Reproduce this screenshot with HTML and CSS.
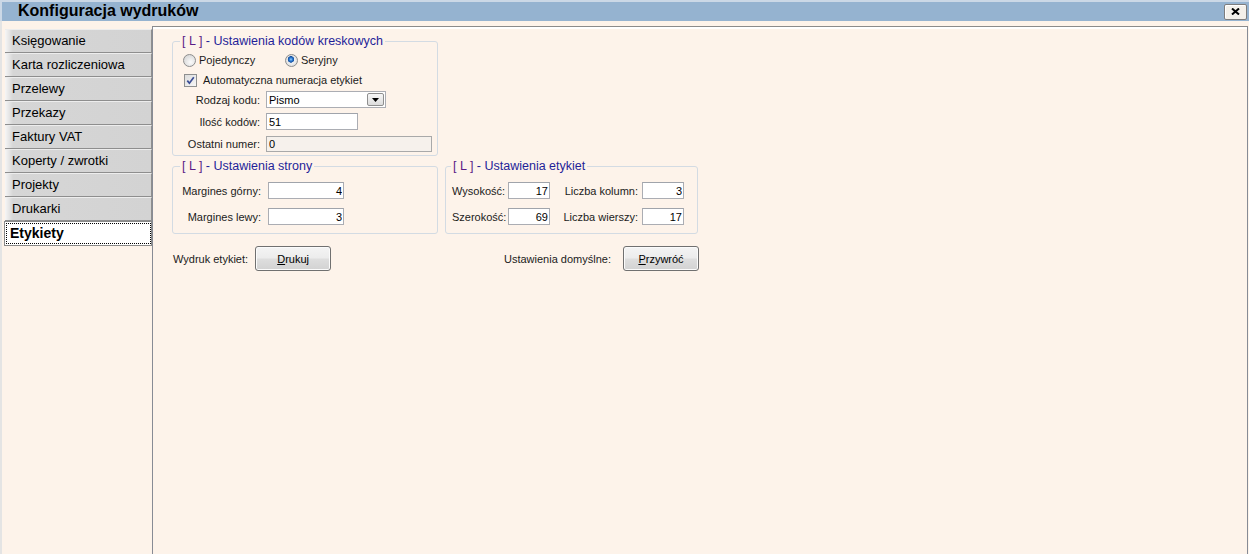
FILE: index.html
```html
<!doctype html>
<html lang="pl">
  <head>
    <meta charset="UTF-8" />
    <meta name="viewport" content="width=device-width, initial-scale=1.0" />
    <title>Konfiguracja wydruków</title>
    <link rel="stylesheet" href="styles.css">
  </head>
  <body>
    <div class="window">
      <!-- Pasek tytułu -->
      <header class="titlebar">
        <h1 class="title">Konfiguracja wydruków</h1>
        <button class="close-btn" type="button" aria-label="Zamknij">
          <svg width="9" height="7" viewBox="0 0 9 7">
            <path d="M1 0.5 L8 6.5 M8 0.5 L1 6.5" stroke="#000" stroke-width="2" fill="none"/>
          </svg>
        </button>
      </header>

      <div class="window-body">
        <!-- Zakładki -->
        <nav class="tabs">
          <div class="tab">Księgowanie</div>
          <div class="tab">Karta rozliczeniowa</div>
          <div class="tab">Przelewy</div>
          <div class="tab">Przekazy</div>
          <div class="tab">Faktury VAT</div>
          <div class="tab">Koperty / zwrotki</div>
          <div class="tab">Projekty</div>
          <div class="tab">Drukarki</div>
          <div class="tab tab-active"><span>Etykiety</span></div>
        </nav>

        <main class="panel">
          <div class="panel-content">
            <fieldset class="group group-codes">
              <legend><span class="br">[ L ]</span> - Ustawienia kodów kreskowych</legend>
              <div class="radio-row">
                <label class="radio radio-first"><span class="radio-box"></span>Pojedynczy</label>
                <label class="radio"><span class="radio-box checked"></span>Seryjny</label>
              </div>
              <label class="check-row">
                <span class="check-box">
                  <svg width="9" height="9" viewBox="0 0 9 9">
                    <path d="M1.3 4.6 L3.4 7.2 L7.8 1.2" fill="none" stroke="#3b4d94" stroke-width="1.7"/>
                  </svg>
                </span>
                Automatyczna numeracja etykiet
              </label>
              <div class="form-grid codes-grid">
                <span class="lbl">Rodzaj kodu:</span>
                <div class="select">
                  <span>Pismo</span>
                  <span class="select-btn">
                    <svg width="7" height="4" viewBox="0 0 7 4"><path d="M0 0 H7 L3.5 4 Z" fill="#000"/></svg>
                  </span>
                </div>
                <span class="lbl">Ilość kodów:</span>
                <input class="field field-count" type="text" value="51">
                <span class="lbl">Ostatni numer:</span>
                <input class="field field-last" type="text" value="0" readonly>
              </div>
            </fieldset>

            <div class="group-row">
              <fieldset class="group group-page">
                <legend><span class="br">[ L ]</span> - Ustawienia strony</legend>
                <div class="form-grid page-grid">
                  <span class="lbl">Margines górny:</span>
                  <input class="field num" type="text" value="4">
                  <span class="lbl">Margines lewy:</span>
                  <input class="field num" type="text" value="3">
                </div>
              </fieldset>

              <fieldset class="group group-labels">
                <legend><span class="br">[ L ]</span> - Ustawienia etykiet</legend>
                <div class="form-grid labels-grid">
                  <span class="lbl lbl-left">Wysokość:</span>
                  <input class="field num" type="text" value="17">
                  <span class="lbl">Liczba kolumn:</span>
                  <input class="field num" type="text" value="3">
                  <span class="lbl lbl-left">Szerokość:</span>
                  <input class="field num" type="text" value="69">
                  <span class="lbl">Liczba wierszy:</span>
                  <input class="field num" type="text" value="17">
                </div>
              </fieldset>
            </div>

            <div class="actions">
              <div class="action action-print">
                <span>Wydruk etykiet:</span>
                <button class="btn" type="button"><u>D</u>rukuj</button>
              </div>
              <div class="action action-reset">
                <span>Ustawienia domyślne:</span>
                <button class="btn" type="button"><u>P</u>rzywróć</button>
              </div>
            </div>
          </div>
        </main>
      </div>
    </div>
  </body>
</html>
```

FILE: styles.css
```css
/* Reset */
* {
  margin: 0;
  padding: 0;
  box-sizing: border-box;
}

html, body {
  height: 100%;
}

body {
  font-family: "Liberation Sans", Arial, sans-serif;
  font-size: 11px;
  color: #1b1b1b;
  background: #fdf3ea;
  overflow: hidden;
}

.window {
  display: flex;
  flex-direction: column;
  height: 100vh;
}

/* Pasek tytułu */
.titlebar {
  flex: none;
  height: 21px;
  display: flex;
  align-items: center;
  justify-content: space-between;
  padding: 0 2px 0 18px;
  background: #95b3d0;
  box-shadow: inset 2px 2px 0 #cbd8e6;
}

.title {
  font-size: 16px;
  font-weight: bold;
  line-height: 21px;
  color: #000;
}

.close-btn {
  width: 23px;
  height: 16px;
  margin-top: 2px;
  display: flex;
  align-items: center;
  justify-content: center;
  background: #f3f0ea;
  border: 1px solid #7d7d7d;
  border-radius: 2px;
  box-shadow: inset 1px 1px 0 #fff;
}

.window-body {
  flex: 1;
  min-height: 0;
  display: flex;
  padding-right: 1px;
}

/* Zakładki */
.tabs {
  flex: none;
  width: 152px;
  border-left: 2px solid #e4e4e4;
  padding: 8px 0 0 3px;
}

.tab {
  height: 24px;
  line-height: 22px;
  padding-left: 7px;
  font-size: 13px;
  color: #000;
  background: linear-gradient(90deg, #f6f6f6 0, #d6d6d6 8px, #d3d3d3 100%);
  border-top: 1px solid #ededed;
  border-bottom: 1px solid #8e8e8e;
  border-right: 1px solid #8e8e8e;
}

.tab-active {
  height: 25px;
  margin-left: -1px;
  padding: 1px 0 1px 1px;
  background: #fff;
  border: 1px solid #8a8a8a;
}

.tab-active span {
  display: block;
  height: 100%;
  padding-left: 3px;
  border: 1px dotted #000;
  font-size: 14px;
  font-weight: bold;
  line-height: 19px;
}

/* Panel główny */
.panel {
  flex: 1;
  margin-top: 5px;
  padding: 7px 0 0 19px;
  border-top: 1px solid #8b8b8b;
  border-left: 1px solid #878b95;
  border-right: 1px solid #878b95;
  box-shadow: inset 0 2px 0 #fff;
}

.panel-content {
  width: 527px;
}

.group {
  margin: 0;
  min-width: 0;
  border: 1px solid #d3dbe3;
  border-radius: 3px;
}

.group legend {
  margin-left: -1px;
  padding: 0 2px;
  font-size: 12.5px;
  line-height: 14px;
  color: #1f1f99;
}

.group legend .br {
  color: #5b1b86;
}

.group-codes {
  width: 266px;
  padding: 0 5px 3px 8px;
}

.radio-row {
  height: 18px;
  margin-top: 3px;
  padding-left: 2px;
  display: flex;
  align-items: center;
}

.radio {
  display: flex;
  align-items: center;
  gap: 3px;
}

.radio-first {
  width: 102px;
}

.radio-box {
  width: 13px;
  height: 13px;
  border-radius: 50%;
  border: 1px solid #8d8d8d;
  background: radial-gradient(circle at 60% 65%, #fbfbfb 0, #e2e2e2 55%, #cfcfcf 100%);
}

.radio-box.checked {
  background:
    radial-gradient(circle at 45% 40%, #9cd0ff 0, #2f7fd6 1.5px, #174f9e 3px, transparent 3.5px),
    radial-gradient(circle, #fdfdfd 0, #e6e6e6 60%, #cfcfcf 100%);
}

.check-row {
  height: 18px;
  margin-top: 2px;
  padding-left: 3px;
  display: flex;
  align-items: center;
  gap: 6px;
}

.check-box {
  width: 13px;
  height: 13px;
  display: flex;
  align-items: center;
  justify-content: center;
  border: 1px solid #8e8f8f;
  background: linear-gradient(135deg, #dcdcdc 0, #f6f6f6 100%);
}

/* Siatki formularzy */
.form-grid {
  display: grid;
  align-items: center;
  justify-items: start;
}

.lbl {
  justify-self: end;
  white-space: nowrap;
}

.lbl-left {
  justify-self: start;
}

.codes-grid {
  margin-top: 2px;
  grid-template-columns: 79px auto;
  grid-auto-rows: 17px;
  column-gap: 6px;
  row-gap: 5px;
}

.field {
  height: 17px;
  padding: 0 2px;
  font: inherit;
  color: #000;
  background: #fff;
  border: 1px solid #abadb3;
  border-top-color: #a0a4ab;
  outline: none;
}

.field-count {
  width: 92px;
}

.field-last {
  width: 166px;
  height: 16px;
  background: #f6f1ec;
  border-color: #a9a9a9;
}

.num {
  width: 100%;
  text-align: right;
  padding-right: 1px;
}

.select {
  width: 120px;
  height: 17px;
  display: flex;
  align-items: center;
  justify-content: space-between;
  padding: 0 1px 0 2px;
  background: #fff;
  border: 1px solid #abadb3;
  color: #000;
}

.select-btn {
  width: 17px;
  height: 13px;
  display: flex;
  align-items: center;
  justify-content: center;
  border: 1px solid #8f8f8f;
  border-radius: 2px;
  background: linear-gradient(#f7f7f7, #dcdcdc);
}

.group-row {
  display: flex;
  gap: 7px;
  margin-top: 3px;
}

.group-page {
  width: 266px;
  padding: 0 8px 8px 8px;
}

.page-grid {
  margin-top: 9px;
  grid-template-columns: 80px 76px;
  grid-auto-rows: 17px;
  column-gap: 7px;
  row-gap: 9px;
}

.group-labels {
  width: 253px;
  padding: 0 13px 8px 6px;
}

.labels-grid {
  margin-top: 9px;
  grid-template-columns: 52px 42px 84px 42px;
  grid-auto-rows: 17px;
  column-gap: 4px;
  row-gap: 9px;
}

/* Przyciski */
.actions {
  margin-top: 12px;
  display: flex;
  justify-content: space-between;
}

.action {
  display: flex;
  align-items: center;
}

.action-print {
  gap: 7px;
  padding-left: 1px;
}

.action-reset {
  gap: 12px;
}

.btn {
  width: 76px;
  height: 25px;
  font: inherit;
  color: #000;
  border: 1px solid #707070;
  border-radius: 3px;
  background: linear-gradient(#f4f4f4 0%, #ececec 48%, #dedede 52%, #d2d2d2 100%);
  box-shadow: inset 0 0 0 1px #fbfbfb;
}
```
